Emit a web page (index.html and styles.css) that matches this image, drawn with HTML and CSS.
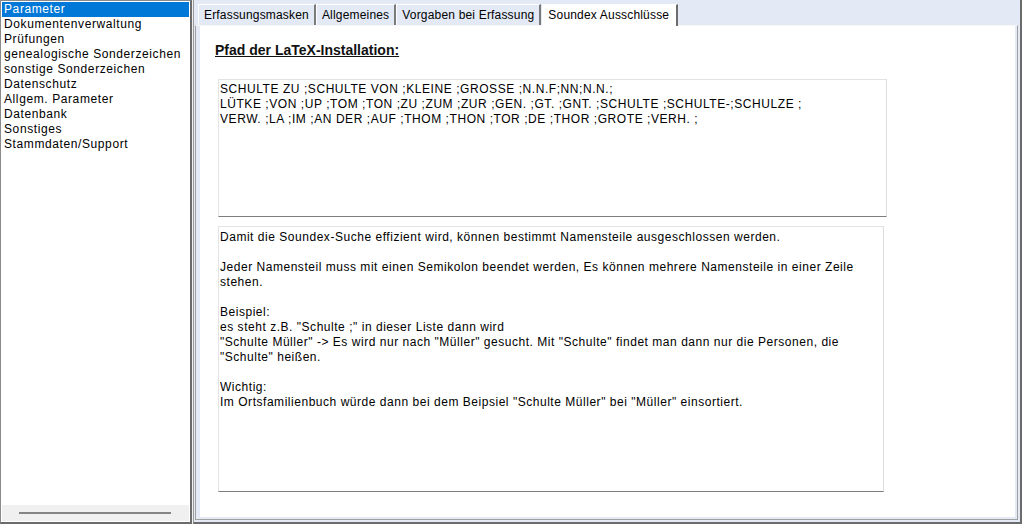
FILE: index.html
```html
<!DOCTYPE html>
<html lang="de">
<head>
<meta charset="utf-8">
<title>Parameter</title>
<link rel="stylesheet" href="styles.css">
</head>
<body>
<div class="side">
  <ul class="list">
    <li class="item sel">Parameter</li>
    <li class="item">Dokumentenverwaltung</li>
    <li class="item">Prüfungen</li>
    <li class="item">genealogische Sonderzeichen</li>
    <li class="item">sonstige Sonderzeichen</li>
    <li class="item">Datenschutz</li>
    <li class="item">Allgem. Parameter</li>
    <li class="item">Datenbank</li>
    <li class="item">Sonstiges</li>
    <li class="item">Stammdaten/Support</li>
  </ul>
  <div class="hbar"><div class="hline"></div></div>
</div>
<div class="main">
  <div class="tabs">
    <div class="tab">Erfassungsmasken</div>
    <div class="tab">Allgemeines</div>
    <div class="tab">Vorgaben bei Erfassung</div>
    <div class="tab active">Soundex Ausschlüsse</div>
  </div>
  <div class="page">
    <div class="sheet">
      <h1 class="heading">Pfad der LaTeX-Installation:</h1>
      <div class="memo memo1">SCHULTE ZU ;SCHULTE VON ;KLEINE ;GROSSE ;N.N.F;NN;N.N.;
LÜTKE ;VON ;UP ;TOM ;TON ;ZU ;ZUM ;ZUR ;GEN. ;GT. ;GNT. ;SCHULTE ;SCHULTE-;SCHULZE ;
VERW. ;LA ;IM ;AN DER ;AUF ;THOM ;THON ;TOR ;DE ;THOR ;GROTE ;VERH. ;</div>
      <div class="memo memo2">Damit die Soundex-Suche effizient wird, können bestimmt Namensteile ausgeschlossen werden.

Jeder Namensteil muss mit einen Semikolon beendet werden, Es können mehrere Namensteile in einer Zeile
stehen.

Beispiel:
es steht z.B. "Schulte ;" in dieser Liste dann wird
"Schulte Müller" -&gt; Es wird nur nach "Müller" gesucht. Mit "Schulte" findet man dann nur die Personen, die
"Schulte" heißen.

Wichtig:
Im Ortsfamilienbuch würde dann bei dem Beipsiel "Schulte Müller" bei "Müller" einsortiert.</div>
    </div>
  </div>
</div>
</body>
</html>
```
FILE: styles.css
```css
html, body {
  margin: 0;
  padding: 0;
}
body {
  width: 1022px;
  height: 524px;
  display: flex;
  gap: 1px;
  background: #f0f0f0;
  font-family: "Liberation Sans", Arial, sans-serif;
  font-size: 12px;
  color: #000;
  overflow: hidden;
}
.side {
  width: 192px;
  height: 524px;
  box-sizing: border-box;
  border: 1px solid #8a8a8a;
  border-right: 2px solid #6b6b6b;
  border-bottom: 2px solid #6b6b6b;
  padding: 1px;
  background: #fff;
  display: flex;
  flex-direction: column;
}
.list {
  flex: 1;
  list-style: none;
  margin: 0;
  padding: 0;
  letter-spacing: 0.6px;
}
.item {
  height: 15px;
  line-height: 15px;
  padding-left: 2px;
  white-space: nowrap;
}
.item.sel {
  background: #0078d7;
  color: #fff;
}
.hbar {
  height: 16px;
  box-sizing: border-box;
  padding-top: 7px;
  background: #f0f0f0;
}
.hline {
  height: 2px;
  width: 152px;
  margin-left: 17px;
  background: #858585;
}
.main {
  flex: 1;
  height: 524px;
  box-sizing: border-box;
  display: flex;
  flex-direction: column;
  border-left: 1px solid #9a9a9a;
  border-right: 2px solid #6b6b6b;
  border-bottom: 2px solid #6b6b6b;
  background: #e3eaf6;
}
.tabs {
  height: 25px;
  box-sizing: border-box;
  padding: 4px 0 0 4px;
  display: flex;
  align-items: flex-end;
  letter-spacing: 0.18px;
}
.tab {
  height: 21px;
  box-sizing: border-box;
  line-height: 20px;
  padding: 0 5px;
  border-top: 1px solid #fff;
  border-left: 1px solid #fff;
  border-right: 2px solid #7a7a7a;
  background: #e3eaf6;
  white-space: nowrap;
}
.tab.active {
  background: #fff;
  margin-left: 1px;
  padding-right: 7px;
  border-right-color: #6b6b6b;
  height: 22px;
  margin-bottom: -1px;
  position: relative;
  z-index: 1;
}
.page {
  flex: 1;
  display: flex;
  margin: 0 2px 2px 1px;
  border: 1px solid #a0a0a0;
  border-top: 1px solid #f7f7f7;
  padding: 0 2px 2px 4px;
  background: #e3eaf6;
}
.sheet {
  flex: 1;
  background: #fff;
  padding: 16px 0 0 15px;
}
.heading {
  margin: 0 0 21px;
  font-size: 14px;
  line-height: 16px;
  font-weight: bold;
  text-decoration: underline;
  color: #111;
}
.memo {
  margin-left: 3px;
  box-sizing: border-box;
  border: 1px solid #e3e3e3;
  border-bottom-color: #7e7e7e;
  border-right-color: #dcdcdc;
  padding: 2px 1px;
  white-space: pre;
  line-height: 15px;
  letter-spacing: 0.56px;
  overflow: hidden;
  background: #fff;
}
.memo1 {
  width: 669px;
  height: 138px;
}
.memo2 {
  width: 666px;
  height: 266px;
  margin-top: 9px;
  padding-top: 3px;
  letter-spacing: 0.53px;
}
```
